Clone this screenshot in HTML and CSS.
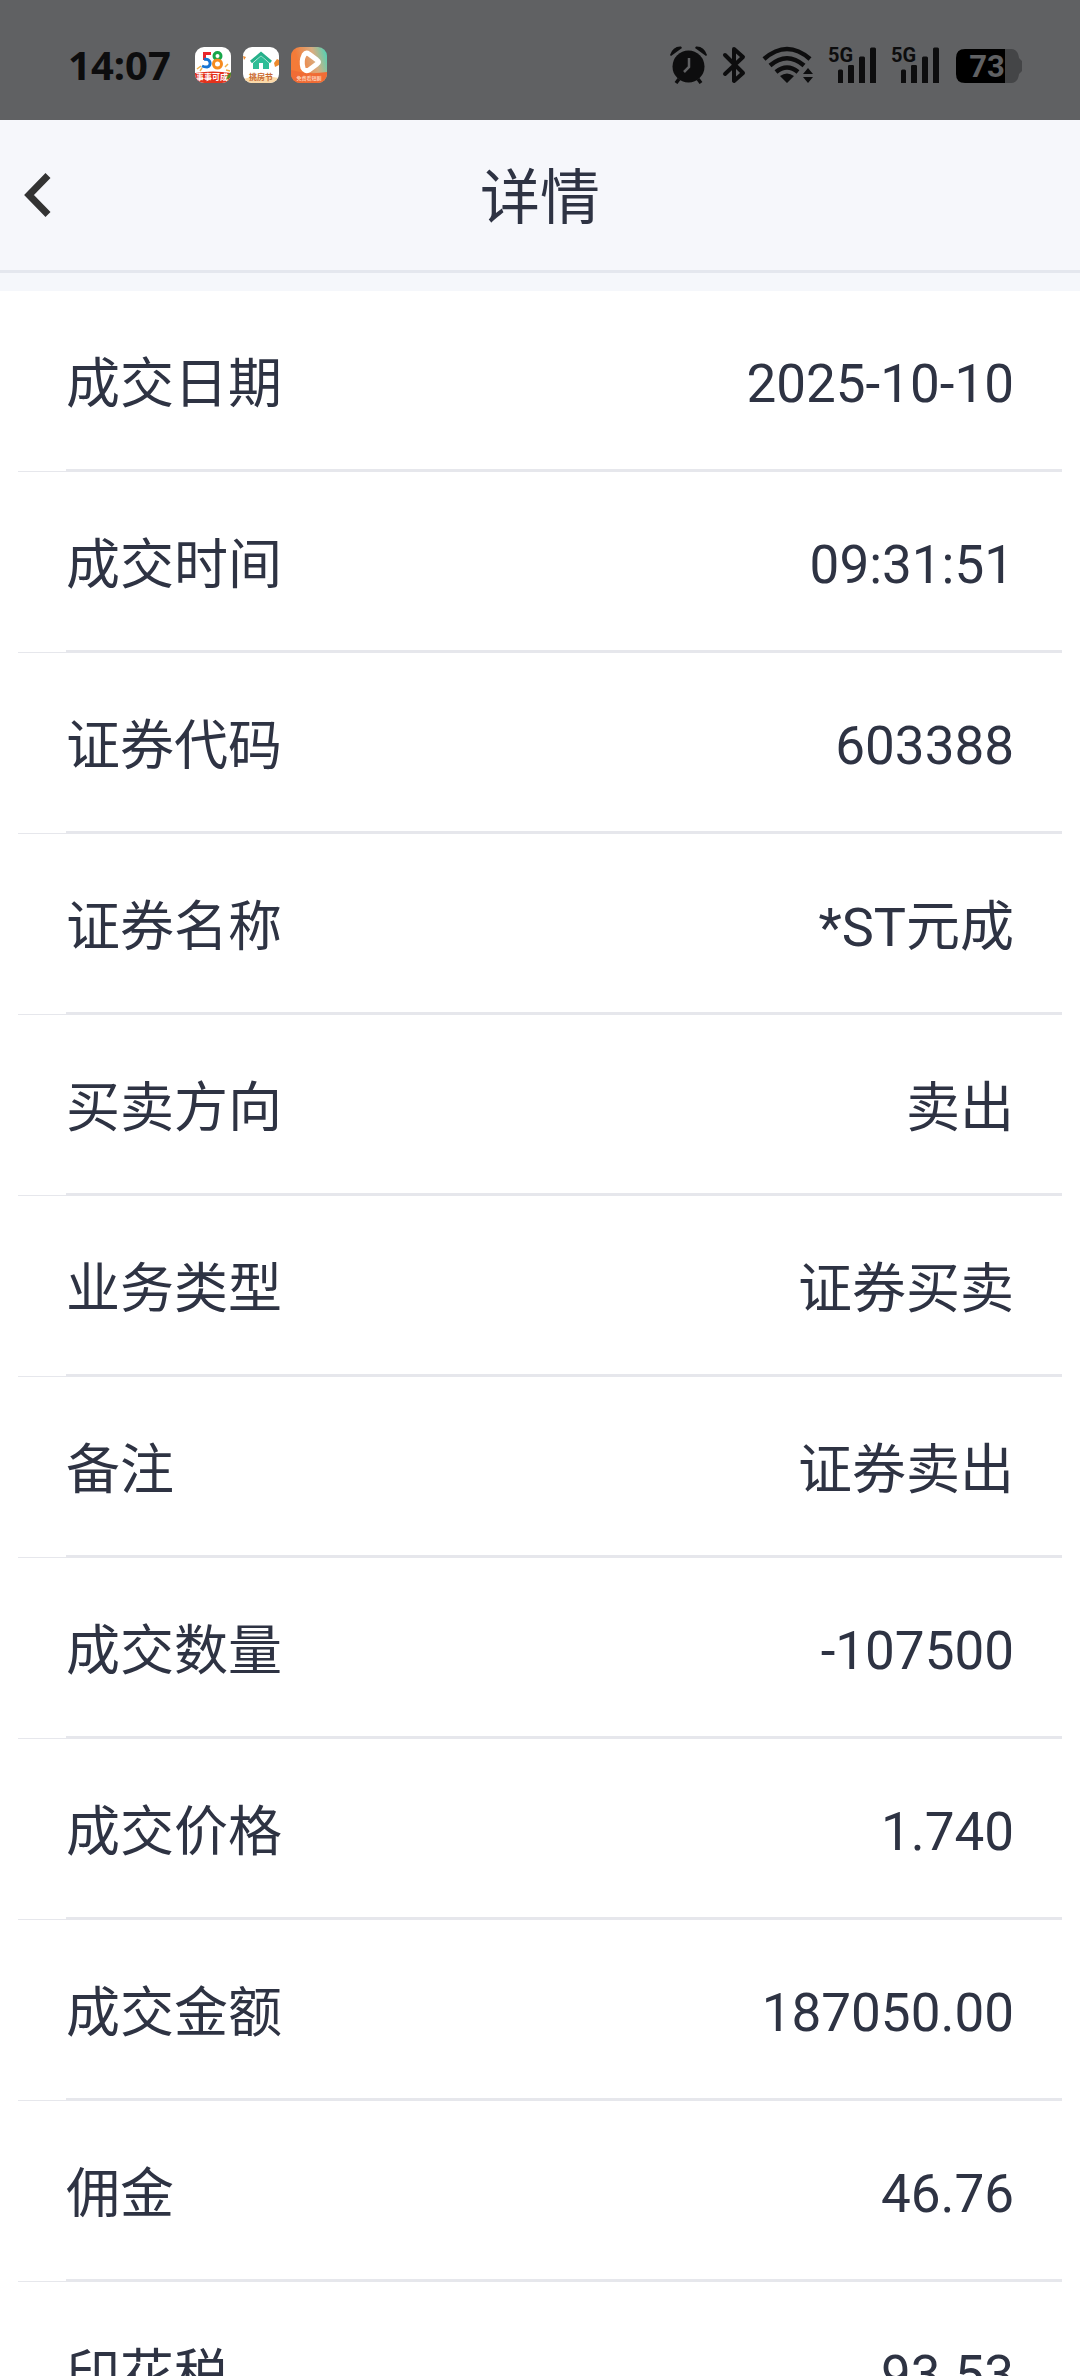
FILE: index.html
```html
<!DOCTYPE html>
<html lang="zh-CN">
<head>
<meta charset="utf-8">
<meta name="viewport" content="width=device-width">
<title>详情</title>
<link rel="stylesheet" href="styles.css">
</head>
<body>
<div class="screen">
  <div class="status">
    <div class="status-group status-left">
      <time class="clock">14:07</time>
      <svg width="36" height="36" viewBox="0 0 36 36" aria-hidden="true">
        <clipPath id="tile"><rect width="36" height="36" rx="9"/></clipPath>
        <g clip-path="url(#tile)">
          <rect width="36" height="36" fill="#fff"/>
          <path d="M16 6.500H9.500V13" fill="none" stroke="#e8262b" stroke-width="3"/>
          <path d="M9 12.500c7-2 8 7 3 7.500q-3 0-5-1" fill="none" stroke="#1674d2" stroke-width="3"/>
          <circle cx="22.500" cy="9" r="3.500" fill="none" stroke="#18a64a" stroke-width="3"/>
          <circle cx="22.500" cy="17" r="4" fill="none" stroke="#f68b1f" stroke-width="3"/>
          <path d="M2 22l4-3M30 20l3-3M31 23l4 1M5 24l2-3" stroke="#efb04a" stroke-width="1.500"/>
          <path d="M0 26q18-3 36 0v10H0z" fill="#e3321c"/>
          <path d="M28 27l3 3 5-5v5l-5 3z" fill="#4c8b2b"/>
          <text class="tile-text" x="17" y="33" fill="#fff" text-anchor="middle">事事可成</text>
        </g>
      </svg>
      <svg width="36" height="36" viewBox="0 0 36 36" aria-hidden="true">
        <g clip-path="url(#tile)">
          <rect width="36" height="36" fill="#fff"/>
          <path d="M0 32q18-5 36-1v5H0z" fill="#fbd9a8"/>
          <path d="M8 15L18 6.500 28 15" fill="none" stroke="#26b08a" stroke-width="3"/>
          <path d="M10 16l8-7 8 7v6H20v-6h-4v6h-6z" fill="#2fbd96"/>
          <path d="M31 16l3-4 2 1v5l-4 2zM0 9l3 1-2 3z" fill="#ee8a2d"/>
          <text class="tile-text" x="18" y="33" fill="#c96a32" text-anchor="middle">挑房节</text>
        </g>
      </svg>
      <svg width="36" height="36" viewBox="0 0 36 36" aria-hidden="true">
        <linearGradient id="sunset" x1="0" y1=".5" x2="1" y2=".2">
          <stop offset=".2" stop-color="#f47b38"/><stop offset=".65" stop-color="#d9ad80"/><stop offset="1" stop-color="#56d0b4"/>
        </linearGradient>
        <g clip-path="url(#tile)">
          <rect width="36" height="36" fill="url(#sunset)"/>
          <path d="M0 23q17 5 36 2v11H0z" fill="#f06c35"/>
          <path d="M13 8q2-3 5-1l8 6q3 2 0 4l-8 6q-4 2-6-2-2-7 1-13z" fill="none" stroke="#fff" stroke-width="5" stroke-linejoin="round"/>
          <text class="tile-caption" x="18" y="33" fill="#ffd9c2" text-anchor="middle">免费看短剧</text>
        </g>
      </svg>
    </div>
    <div class="status-group status-right">
      <svg width="37" height="38" viewBox="0 0 37 38" aria-hidden="true">
        <circle cx="18.500" cy="20.500" r="16"/>
        <path d="M0 9Q3 0 11 .500L12 2 1 10zM37 9Q34 0 26 .500L25 2 36 10z"/>
        <path d="M9 33l-3 4M28 33l3 4" stroke="#0d0d0e" stroke-width="3.500"/>
        <path d="M19 12v9l-5 5" fill="none" stroke="#606163" stroke-width="2.500"/>
      </svg>
      <svg width="24" height="38" viewBox="0 0 24 38" aria-hidden="true">
        <path d="M3 9l18 18-9 8V3l9 8L3 28" fill="none" stroke="#0d0d0e" stroke-width="4" stroke-linejoin="round" stroke-linecap="round"/>
      </svg>
      <svg width="52" height="38" viewBox="0 0 52 38" aria-hidden="true">
        <path d="M3 13Q26-7 49 13M9 19.500Q26 5 43 19.500M15 26Q26 17 37 26" fill="none" stroke="#0d0d0e" stroke-width="4.500"/>
        <path d="M19 30q7-5 14 0l-7 7zM42 28l5-6 5 6zM42 31h10l-5 6z"/>
      </svg>
      <svg class="signal" width="48" height="38" viewBox="0 0 48 38" aria-hidden="true">
        <text class="network" x="0" y="16">5G</text>
        <path d="M10 25q0-1.500 1.500-1.500h2q1.500 0 1.500 1.500v12h-5zM20 20q0-1 1.500-1h3q1.500 0 1.500 1v17h-6zM31 12q0-1.500 1.500-1.500h3q1.500 0 1.500 1.500v25h-6zM42 3q0-1.500 1.500-1.500h3Q48 1.500 48 3v34h-6z"/>
      </svg>
      <svg class="signal" width="48" height="38" viewBox="0 0 48 38" aria-hidden="true">
        <text class="network" x="0" y="16">5G</text>
        <path d="M10 25q0-1.500 1.500-1.500h2q1.500 0 1.500 1.500v12h-5zM20 20q0-1 1.500-1h3q1.500 0 1.500 1v17h-6zM31 12q0-1.500 1.500-1.500h3q1.500 0 1.500 1.500v25h-6zM42 3q0-1.500 1.500-1.500h3Q48 1.500 48 3v34h-6z"/>
      </svg>
      <svg width="68" height="38" viewBox="0 0 68 38" aria-hidden="true">
        <path d="M51 3h6q7 0 8 9l3 3v10l-3 3q-1 9-8 9h-6z" fill="#444547"/>
        <path d="M11 3h40v34H11q-9 0-9-9V12q0-9 9-9z" fill="#000"/>
        <text class="charge" x="33" y="31" text-anchor="middle">73</text>
      </svg>
    </div>
  </div>

  <header class="titlebar">
    <button class="back" type="button" aria-label="返回">
      <svg width="28" height="46" viewBox="0 0 28 46" aria-hidden="true">
        <path d="M24 3.500L5 23l19 19.500" fill="none" stroke="#333" stroke-width="7"/>
      </svg>
    </button>
    <h1 class="title">详情</h1>
  </header>

  <main class="content">
    <dl class="details">
      <div class="row"><dt>成交日期</dt><dd class="number">2025-10-10</dd></div>
      <div class="row"><dt>成交时间</dt><dd class="number">09:31:51</dd></div>
      <div class="row"><dt>证券代码</dt><dd class="number">603388</dd></div>
      <div class="row"><dt>证券名称</dt><dd>*ST元成</dd></div>
      <div class="row"><dt>买卖方向</dt><dd>卖出</dd></div>
      <div class="row"><dt>业务类型</dt><dd>证券买卖</dd></div>
      <div class="row"><dt>备注</dt><dd>证券卖出</dd></div>
      <div class="row"><dt>成交数量</dt><dd class="number">-107500</dd></div>
      <div class="row"><dt>成交价格</dt><dd class="number">1.740</dd></div>
      <div class="row"><dt>成交金额</dt><dd class="number">187050.00</dd></div>
      <div class="row"><dt>佣金</dt><dd class="number">46.76</dd></div>
      <div class="row"><dt>印花税</dt><dd class="number">93.53</dd></div>
    </dl>
  </main>
</div>
</body>
</html>
```
FILE: styles.css
```css
* {
  box-sizing: border-box;
}

body {
  margin: 0;
  background: #fff;
  color: #2e3343;
  font-family: Roboto, "Noto Sans CJK SC", sans-serif;
}

.screen {
  display: flex;
  flex-direction: column;
  height: 100vh;
}

/* System status bar */
.status {
  display: flex;
  flex: none;
  align-items: center;
  justify-content: space-between;
  height: 120px;
  padding: 10px 58px 0 68px;
  background: #606163;
  color: #0d0d0e;
  fill: #0d0d0e;
}

.status-group {
  display: flex;
  align-items: center;
}

.status-left {
  gap: 12px;
}

.status-right {
  gap: 15px;
}

.signal {
  overflow: visible;
}

.clock {
  margin-right: 12px;
  font: 700 40px/48px "Noto Sans", sans-serif;
}

.tile-text {
  font: 700 8px "Noto Sans CJK SC", sans-serif;
}

.tile-caption {
  font: 500 5px "Noto Sans CJK SC", sans-serif;
}

.network {
  font: 700 20px Roboto, sans-serif;
}

.charge {
  font: 700 31px Roboto, sans-serif;
  fill: #606163;
}

/* Title bar */
.titlebar {
  display: grid;
  flex: none;
  grid-template-columns: 80px 1fr 80px;
  align-items: center;
  height: 153px;
  border-bottom: 3px solid #e4e7ee;
  background: #f6f7fb;
}

.back {
  display: flex;
  padding: 0 0 0 24px;
  border: 0;
  background: none;
}

.title {
  margin: 0;
  padding-top: 8px;
  font-size: 60px;
  font-weight: 400;
  line-height: 80px;
  text-align: center;
}

/* Transaction details */
.content {
  flex: 1;
  min-height: 0;
  overflow-y: auto;
  border-top: 18px solid #f5f7fb;
  scrollbar-width: none;
}

.details {
  margin: 0 18px;
}

.row {
  display: flex;
  align-items: stretch;
  height: 181px;
  padding: 8px 0 0 48px;
  border-bottom: 1px solid #e6e7ec;
  font-size: 54px;
  line-height: 172px;
}

.row dt,
.row dd {
  margin: 0;
  box-shadow: inset 0 -2px #e6e7ec;
}

.row dd {
  flex: 1;
  padding-right: 48px;
  text-align: right;
}

.row .number {
  font-size: 53px;
  line-height: 170px;
}
```
